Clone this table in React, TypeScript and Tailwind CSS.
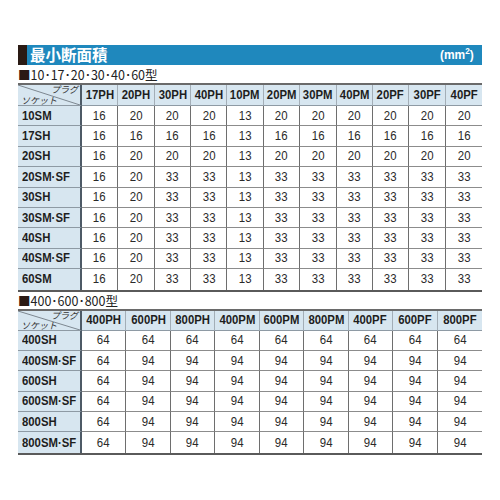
import React from "react";

const t1cols = ["17PH", "20PH", "30PH", "40PH", "10PM", "20PM", "30PM", "40PM", "20PF", "30PF", "40PF"];
const a = ["16", "20", "33", "33", "13", "33", "33", "33", "33", "33", "33"];
const t1rows: [string, string[]][] = [
  ["10SM", ["16", "20", "20", "20", "13", "20", "20", "20", "20", "20", "20"]],
  ["17SH", ["16", "16", "16", "16", "13", "16", "16", "16", "16", "16", "16"]],
  ["20SH", ["16", "20", "20", "20", "13", "20", "20", "20", "20", "20", "20"]],
  ["20SM·SF", a],
  ["30SH", a],
  ["30SM·SF", a],
  ["40SH", a],
  ["40SM·SF", a],
  ["60SM", a],
];

const t2cols = ["400PH", "600PH", "800PH", "400PM", "600PM", "800PM", "400PF", "600PF", "800PF"];
const b = ["64", "94", "94", "94", "94", "94", "94", "94", "94"];
const t2rows: [string, string[]][] = [
  ["400SH", ["64", "64", "64", "64", "64", "64", "64", "64", "64"]],
  ["400SM·SF", b],
  ["600SH", b],
  ["600SM·SF", b],
  ["800SH", b],
  ["800SM·SF", b],
];

function DiagCell({ h }: { h: string }) {
  return (
    <div className={`relative bg-[#d7e6f0] border-r-2 border-r-[#4d5a66] border-b border-b-[#8e9aa4] ${h}`}>
      <svg className="absolute inset-0 w-full h-full" viewBox="0 0 100 100" preserveAspectRatio="none">
        <line x1="0" y1="0" x2="100" y2="100" stroke="#7d8790" strokeWidth="1" vectorEffect="non-scaling-stroke" />
      </svg>
      <span className="absolute right-[2px] top-[0px] text-[9px] leading-[9px] italic text-[#333] [font-family:'Noto_Sans_CJK_JP',sans-serif]">
        プラグ
      </span>
      <span className="absolute left-[3px] bottom-[0px] text-[9px] leading-[9px] italic text-[#333] [font-family:'Noto_Sans_CJK_JP',sans-serif]">
        ソケット
      </span>
    </div>
  );
}

function Table({
  cols,
  rows,
  gridClass,
  headerH,
  rowH,
}: {
  cols: string[];
  rows: [string, string[]][];
  gridClass: string;
  headerH: string;
  rowH: string;
}) {
  return (
    <div className={`grid ${gridClass} border-t-2 border-t-[#6a6a6a] border-b-2 border-b-[#5a5a5a]`}>
      <DiagCell h={headerH} />
      {cols.map((c, i) => (
        <div
          key={c}
          className={`${headerH} bg-[#d7e6f0] flex items-center justify-center border-b border-b-[#8e9aa4] ${
            i < cols.length - 1 ? "border-r border-r-[#a3aeb7]" : ""
          }`}
        >
          <span className="inline-block scale-x-[0.84] font-bold text-[13.5px] leading-[14px] text-[#1e1e1e] [font-family:'Liberation_Sans',Arial,sans-serif] whitespace-nowrap">
            {c}
          </span>
        </div>
      ))}
      {rows.map(([label, vals], ri) => {
        const last = ri === rows.length - 1;
        return (
          <React.Fragment key={label}>
            <div
              className={`${rowH} bg-[#d7e6f0] flex items-center pl-[4px] border-r-2 border-r-[#4d5a66] ${
                last ? "" : "border-b border-b-[#8e9aa4]"
              }`}
            >
              <span className="inline-block origin-left scale-x-[0.84] font-bold text-[13.5px] leading-[14px] text-[#1e1e1e] [font-family:'Liberation_Sans',Arial,sans-serif] whitespace-nowrap">
                {label}
              </span>
            </div>
            {vals.map((v, i) => (
              <div
                key={i}
                className={`${rowH} bg-white flex items-center justify-center ${
                  last ? "" : "border-b border-b-[#8c8c8c]"
                } ${i < vals.length - 1 ? "border-r border-r-[#6e6e6e]" : ""}`}
              >
                <span className="inline-block scale-x-[0.88] text-[13px] leading-[14px] text-[#2a2a2a] [font-family:'Liberation_Sans',Arial,sans-serif]">
                  {v}
                </span>
              </div>
            ))}
          </React.Fragment>
        );
      })}
    </div>
  );
}

export default function App() {
  return (
    <div className="w-[500px] h-[500px] bg-white pt-[45px] px-[18px]">
      <div className="flex h-[20px]">
        <div className="w-[9px] bg-[#2a1a14]" />
        <div className="flex-1 bg-[#1f88bd] flex items-center justify-between pl-[3px] pr-[8px]">
          <span className="text-white font-bold text-[15.5px] leading-none [font-family:'Noto_Sans_CJK_JP',sans-serif]">
            最小断面積
          </span>
          <span className="flex items-start origin-right scale-x-[0.92] text-white font-bold text-[13px] leading-[14px] [font-family:'Liberation_Sans',Arial,sans-serif]">
            <span>(mm</span>
            <span className="text-[9px] leading-[9px] -mt-[1px]">2</span>
            <span>)</span>
          </span>
        </div>
      </div>
      <div className="h-[18px] flex items-center pt-[2px] text-[12.5px] leading-[12px] text-[#222] [font-family:'Noto_Sans_CJK_JP',sans-serif]">
        <span className="text-[#2a1a14]">■</span>10･17･20･30･40･60型
      </div>
      <Table
        cols={t1cols}
        rows={t1rows}
        gridClass="grid-cols-[64px_repeat(11,minmax(0,1fr))]"
        headerH="h-[21px]"
        rowH="h-[20.4px]"
      />
      <div className="h-[17px] flex items-center pt-[1px] text-[12.5px] leading-[12px] text-[#222] [font-family:'Noto_Sans_CJK_JP',sans-serif]">
        <span className="text-[#2a1a14]">■</span>400･600･800型
      </div>
      <Table
        cols={t2cols}
        rows={t2rows}
        gridClass="grid-cols-[64px_repeat(9,minmax(0,1fr))]"
        headerH="h-[20px]"
        rowH="h-[20.4px]"
      />
    </div>
  );
}
